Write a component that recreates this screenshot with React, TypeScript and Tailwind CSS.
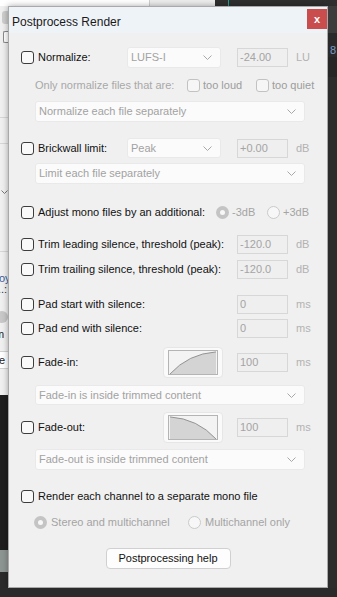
import clsx from "clsx";

function Chevron() {
  return (
    <svg width="9" height="5" viewBox="0 0 9 5" className="shrink-0">
      <path d="M0.5 0.5 L4.5 4.5 L8.5 0.5" fill="none" stroke="#a8a8a8" strokeWidth="1" />
    </svg>
  );
}

function Box({ disabled }: { disabled?: boolean }) {
  return (
    <span
      className={clsx(
        "w-[13px] h-[13px] rounded-[3px] border shrink-0",
        disabled ? "border-[#c2c2c2] bg-[#f6f6f6]" : "border-[#3c3c3c] bg-[#f9f9f9]"
      )}
    />
  );
}

function Radio({ checked }: { checked?: boolean }) {
  if (checked) {
    return (
      <span className="w-[13px] h-[13px] rounded-full bg-[#c4c4c4] flex items-center justify-center shrink-0">
        <span className="w-[5px] h-[5px] rounded-full bg-[#f7f7f7]" />
      </span>
    );
  }
  return <span className="w-[13px] h-[13px] rounded-full border border-[#cacaca] bg-[#f7f7f7] shrink-0" />;
}

function Select({ value, className }: { value: string; className?: string }) {
  return (
    <div
      className={clsx(
        "bg-[#fbfbfb] border border-[#e9e9e9] rounded-[3px] flex items-center justify-between pl-[3px] pr-[8px] text-[#a2a2a2]",
        className
      )}
    >
      <span>{value}</span>
      <Chevron />
    </div>
  );
}

function Num({ value }: { value: string }) {
  return (
    <div className="w-[51px] h-[19px] bg-[#efefef] border border-[#d7d7d7] flex items-center pl-[2px] text-[#a4a4a4] shrink-0">
      {value}
    </div>
  );
}

function Unit({ children }: { children: string }) {
  return <span className="ml-[8px] text-[#b2b2b2]">{children}</span>;
}

function Check({ label, width }: { label: string; width: number }) {
  return (
    <div className="flex items-center gap-[4px] shrink-0" style={{ width }}>
      <Box />
      <span className="text-[#111]">{label}</span>
    </div>
  );
}

function Curve({ out }: { out?: boolean }) {
  const d = out ? "M0 1 Q30 3 50 25" : "M0 25 Q20 3 50 1";
  const fill = out ? "M0 1 Q30 3 50 25 L0 25 Z" : "M0 25 Q20 3 50 1 L50 25 Z";
  return (
    <div className="w-[60px] h-[31px] rounded-[4px] bg-[#fafafa] border border-[#e6e6e6] flex items-center justify-center shrink-0">
      <svg width="50" height="25" viewBox="0 0 50 25" className="border border-[#b4b4b4] bg-[#f3f3f3]">
        <path d={fill} fill="#d4d4d4" />
        <path d={d} fill="none" stroke="#8c8c8c" strokeWidth="1" />
      </svg>
    </div>
  );
}

function Dialog() {
  return (
    <div className="w-[320px] h-[582px] shrink-0 border border-[#a9a9a9] bg-[#f0f0f0] shadow-[0_0_6px_rgba(0,0,0,0.35)] flex flex-col text-[11px] leading-none">
      {/* title bar */}
      <div className="h-[26px] bg-[#eef3f8] flex items-start justify-between pl-[3px]">
        <span className="text-[12px] text-[#1a1a1a] mt-[9px]">Postprocess Render</span>
        <button className="w-[20px] h-[20px] mt-[2px] bg-[#c94d4d] text-white text-[11px] font-bold flex items-center justify-center">
          x
        </button>
      </div>

      <div className="flex flex-col pt-[14px]">
        {/* normalize */}
        <div className="h-[21px] flex items-center pl-[12px]">
          <Check label="Normalize:" width={106} />
          <Select value="LUFS-I" className="w-[94px] h-[21px]" />
          <span className="w-[16px]" />
          <Num value="-24.00" />
          <Unit>LU</Unit>
        </div>
        <div className="h-[14px] mt-[10px] flex items-center pl-[26px] text-[#a8a8a8]">
          <span className="w-[152px]">Only normalize files that are:</span>
          <div className="w-[69px] flex items-center gap-[3px]">
            <Box disabled />
            <span className="text-[#9c9c9c]">too loud</span>
          </div>
          <div className="flex items-center gap-[3px]">
            <Box disabled />
            <span className="text-[#9c9c9c]">too quiet</span>
          </div>
        </div>
        <Select value="Normalize each file separately" className="ml-[26px] w-[270px] h-[21px] mt-[9px]" />

        {/* brickwall */}
        <div className="h-[20px] mt-[16px] flex items-center pl-[12px]">
          <Check label="Brickwall limit:" width={106} />
          <Select value="Peak" className="w-[94px] h-[20px]" />
          <span className="w-[16px]" />
          <Num value="+0.00" />
          <Unit>dB</Unit>
        </div>
        <Select value="Limit each file separately" className="ml-[26px] w-[270px] h-[21px] mt-[5px]" />

        {/* mono */}
        <div className="h-[14px] mt-[21px] flex items-center pl-[12px]">
          <Check label="Adjust mono files by an additional:" width={195} />
          <div className="w-[51px] flex items-center gap-[3px]">
            <Radio checked />
            <span className="text-[#a4a4a4]">-3dB</span>
          </div>
          <div className="flex items-center gap-[3px]">
            <Radio />
            <span className="text-[#a4a4a4]">+3dB</span>
          </div>
        </div>

        {/* trim */}
        <div className="h-[19px] mt-[16px] flex items-center pl-[12px]">
          <Check label="Trim leading silence, threshold (peak):" width={216} />
          <Num value="-120.0" />
          <Unit>dB</Unit>
        </div>
        <div className="h-[19px] mt-[6px] flex items-center pl-[12px]">
          <Check label="Trim trailing silence, threshold (peak):" width={216} />
          <Num value="-120.0" />
          <Unit>dB</Unit>
        </div>

        {/* pad */}
        <div className="h-[19px] mt-[16px] flex items-center pl-[12px]">
          <Check label="Pad start with silence:" width={216} />
          <Num value="0" />
          <Unit>ms</Unit>
        </div>
        <div className="h-[19px] mt-[5px] flex items-center pl-[12px]">
          <Check label="Pad end with silence:" width={216} />
          <Num value="0" />
          <Unit>ms</Unit>
        </div>

        {/* fades */}
        <div className="h-[31px] mt-[9px] flex items-center pl-[12px]">
          <Check label="Fade-in:" width={142} />
          <Curve />
          <span className="w-[14px]" />
          <Num value="100" />
          <Unit>ms</Unit>
        </div>
        <Select value="Fade-in is inside trimmed content" className="ml-[26px] w-[270px] h-[20px] mt-[7px]" />
        <div className="h-[31px] mt-[7px] flex items-center pl-[12px]">
          <Check label="Fade-out:" width={142} />
          <Curve out />
          <span className="w-[14px]" />
          <Num value="100" />
          <Unit>ms</Unit>
        </div>
        <Select value="Fade-out is inside trimmed content" className="ml-[26px] w-[270px] h-[21px] mt-[6px]" />

        {/* render channels */}
        <div className="h-[14px] mt-[19px] flex items-center pl-[12px]">
          <Check label="Render each channel to a separate mono file" width={280} />
        </div>
        <div className="h-[14px] mt-[12px] flex items-center pl-[25px]">
          <div className="w-[154px] flex items-center gap-[4px]">
            <Radio checked />
            <span className="text-[#a4a4a4]">Stereo and multichannel</span>
          </div>
          <div className="flex items-center gap-[4px]">
            <Radio />
            <span className="text-[#a4a4a4]">Multichannel only</span>
          </div>
        </div>

        <div className="mt-[19px] flex justify-center">
          <button className="w-[125px] h-[21px] rounded-[4px] bg-[#fdfdfd] border border-[#d0d0d0] text-[#111] text-[11px]">
            Postprocessing help
          </button>
        </div>
      </div>
    </div>
  );
}

function LeftEdge() {
  return (
    <div className="w-[8px] h-[582px] flex flex-col bg-[#f0f0f0] overflow-hidden text-[11px] leading-none">
      <div className="h-[5px]" />
      <div className="h-[13px] ml-[2px] rounded-l-[3px] bg-[#cdcdcd]" />
      <div className="h-[7px]" />
      <div className="h-[12px] ml-[3px] rounded-l-[2px] border border-r-0 border-[#8a8a8a] bg-white" />
      <div className="h-[74px]" />
      <div className="h-[1px] bg-[#d6d6d6]" />
      <div className="h-[25px]" />
      <div className="h-[1px] bg-[#d6d6d6]" />
      <div className="h-[46px]" />
      <div className="h-[6px] pl-[1px]">
        <svg width="7" height="4" viewBox="0 0 7 4">
          <path d="M0.5 0.5 L3.5 3.5 L6.5 0.5" fill="none" stroke="#777" />
        </svg>
      </div>
      <div className="h-[55px]" />
      <div className="h-[1px] bg-[#d6d6d6]" />
      <div className="h-[21px]" />
      <div className="h-[11px] text-[#3a5d9a] -ml-[1px]">oy</div>
      <div className="h-[11px] text-[#333] -ml-[2px]">..:</div>
      <div className="h-[16px]" />
      <div className="h-[12px] w-[12px] -ml-[4px] rounded-full bg-[#c8c8c8]" />
      <div className="h-[6px]" />
      <div className="h-[12px] text-[#222] -ml-[5px]">m</div>
      <div className="h-[10px]" />
      <div className="h-[18px] bg-white border-y border-[#d0d0d0] text-[#222] flex items-center -ml-[1px]">e</div>
      <div className="h-[26px]" />
      <div className="h-[155px] bg-[#1f1f1f]" />
      <div className="h-[22px] bg-[#8d9593]" />
      <div className="flex-1 bg-[#2b2b2b]" />
    </div>
  );
}

function RightEdge() {
  return (
    <div className="w-[9px] h-[582px] flex flex-col bg-[#2a2a2a] overflow-hidden text-[11px] leading-none">
      <div className="h-[27px] bg-[#3c3c3c]" />
      <div className="h-[12px]" />
      <div className="h-[12px] text-[#7c9cc8] pl-[2px]">8</div>
      <div className="h-[20px] bg-[#262626]" />
      <div className="flex-1 bg-[#2c2c2c]" />
    </div>
  );
}

export default function App() {
  return (
    <div className="w-[337px] h-[597px] overflow-hidden bg-[#2b2b2b] flex flex-col [font-family:'Liberation_Sans',Arial,sans-serif]">
      <div className="h-[6px] flex shrink-0">
        <div className="w-[150px] bg-white border-r border-[#cfcfcf]" />
        <div className="w-[65px] bg-[#ececec]" />
        <div className="w-[13px] bg-[#2f2f2f]" />
        <div className="w-[1px] bg-[#2a9d8f]" />
        <div className="flex-1 bg-[#2f2f2f]" />
      </div>
      <div className="flex shrink-0">
        <LeftEdge />
        <Dialog />
        <RightEdge />
      </div>
      <div className="flex-1 bg-[#2a2a2a]" />
    </div>
  );
}
